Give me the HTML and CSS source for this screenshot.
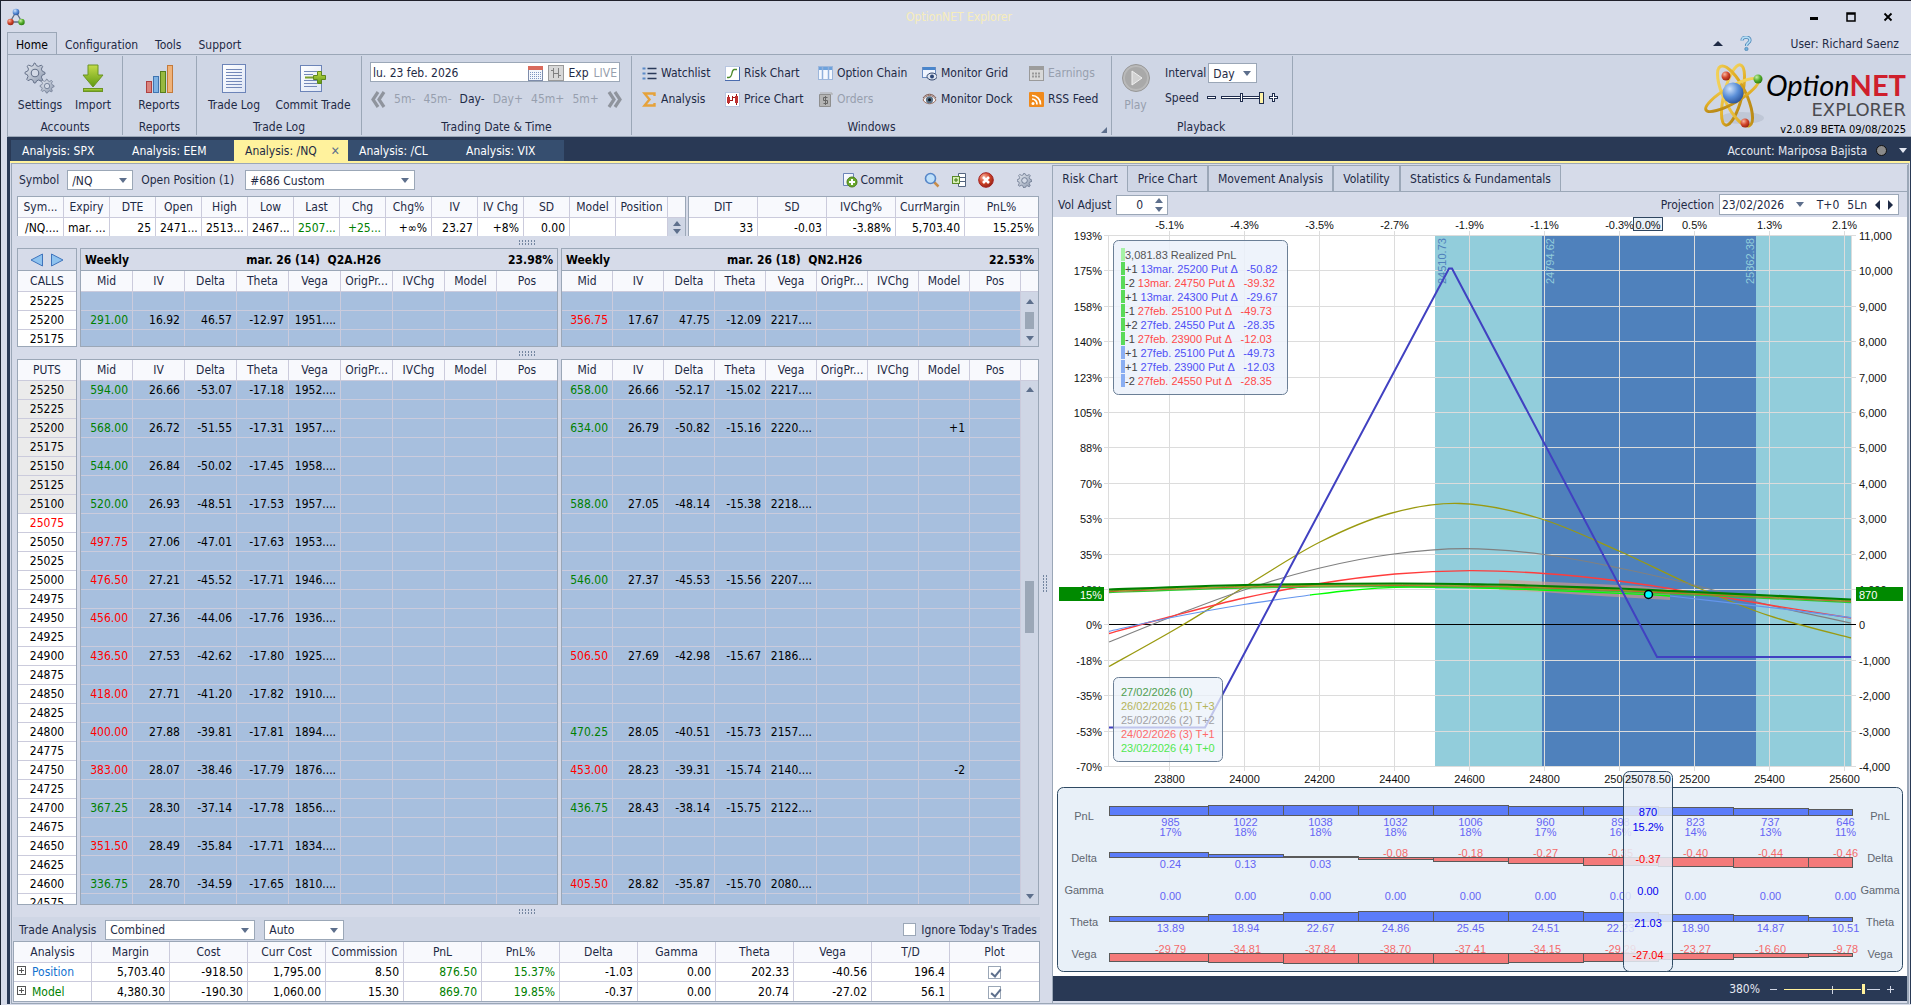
FILE: index.html
```html
<!DOCTYPE html>
<html lang="en">
<head>
<meta charset="utf-8">
<title>OptionNET Explorer</title>
<link rel="stylesheet" href="styles.css">
</head>
<body>
<svg class="defs" aria-hidden="true">
  <defs>
    <linearGradient id="gSteel" x1="0" y1="0" x2="1" y2="1"><stop offset="0" stop-color="#e9edf4"/><stop offset="1" stop-color="#8b97ad"/></linearGradient>
    <linearGradient id="gGreen" x1="0" y1="0" x2="0" y2="1"><stop offset="0" stop-color="#c5dc4a"/><stop offset="1" stop-color="#5f9a12"/></linearGradient>
    <linearGradient id="gPage" x1="0" y1="0" x2="1" y2="1"><stop offset="0" stop-color="#ffffff"/><stop offset="1" stop-color="#dde5f5"/></linearGradient>
    <radialGradient id="gBlue" cx=".35" cy=".3" r=".8"><stop offset="0" stop-color="#cfe2fb"/><stop offset=".5" stop-color="#5b8fd8"/><stop offset="1" stop-color="#22498f"/></radialGradient>
    <radialGradient id="gRed" cx=".35" cy=".3" r=".8"><stop offset="0" stop-color="#f7b5a0"/><stop offset=".5" stop-color="#d2452a"/><stop offset="1" stop-color="#8a1d10"/></radialGradient>
    <radialGradient id="gLime" cx=".35" cy=".3" r=".8"><stop offset="0" stop-color="#c9f0a5"/><stop offset=".5" stop-color="#55ae2c"/><stop offset="1" stop-color="#23700c"/></radialGradient>
    <linearGradient id="gGold" x1="0" y1="0" x2="1" y2="1"><stop offset="0" stop-color="#f7dc6a"/><stop offset=".6" stop-color="#e0ac22"/><stop offset="1" stop-color="#a87a10"/></linearGradient>
    <g id="cog"><path d="M8 0l1.2 2.2 1.6.5 2.3-1 1 1-1 2.2.7 1.6L16 7.6v1.2l-2.3 1-.6 1.5 1 2.3-1 1-2.2-1-1.6.7L8.4 16H7.2l-1-2.3-1.5-.6-2.3 1-1-1 1-2.3-.6-1.5L0 8.6V7.4l2.2-1 .6-1.5-1-2.3 1-1 2.3 1 1.5-.6L7.400 0z" fill="url(#gSteel)" stroke="#66728a" stroke-width=".8"/><circle cx="8" cy="8" r="3" fill="#d3d9e6" stroke="#66728a" stroke-width=".9"/></g>
  </defs>
</svg>
<div class="app">
  <header class="titlebar">
    <svg class="appicon" width="18" height="18" viewBox="0 0 18 18"><path d="M9 4L3 14h12z" fill="none" stroke="#5d6d84" stroke-width="1.300"/><circle cx="9" cy="4" r="3.300" fill="url(#gBlue)"/><circle cx="3.500" cy="14" r="3.200" fill="url(#gRed)"/><circle cx="14.500" cy="14" r="3.200" fill="url(#gLime)"/></svg>
    <h1>OptionNET Explorer</h1>
    <div class="winbtns">
      <button type="button" aria-label="Minimize"><svg width="10" height="10"><rect x="1" y="5" width="8" height="3"/></svg></button>
      <button type="button" aria-label="Maximize"><svg width="10" height="10"><path d="M1 1h8v8H1z M1 2h8" fill="none" stroke="#000" stroke-width="1.500"/></svg></button>
      <button type="button" aria-label="Close"><svg width="10" height="10"><path d="M1.500 1.500l7 7M8.500 1.500l-7 7" stroke="#000" stroke-width="1.800"/></svg></button>
    </div>
  </header>

  <nav class="menu">
    <button type="button" class="on">Home</button><button type="button">Configuration</button><button type="button">Tools</button><button type="button">Support</button>
    <div class="user"><i class="tri up dark"></i>
      <svg width="12" height="15" viewBox="0 0 12 15"><path d="M2 4.500C2 0 10 0 10 4.300 10 7 6.500 6.500 6.500 10" fill="none" stroke="#4f88b8" stroke-width="3.200"/><path d="M2 4.500C2 0 10 0 10 4.300 10 7 6.500 6.500 6.500 10" fill="none" stroke="#b5def5" stroke-width="1.600"/><circle cx="6.400" cy="13" r="1.700" fill="#6fb0dc" stroke="#3f78a8" stroke-width=".6"/></svg>
      <span>User: Richard Saenz</span></div>
  </nav>

  <section class="ribbon">
    <div class="group accounts"><div class="body">
      <button type="button" class="big"><svg width="32" height="32" viewBox="0 0 32 32"><use href="#cog" transform="translate(1 1) scale(1.250)"/><use href="#cog" transform="translate(16 17) scale(.88)"/></svg>Settings</button>
      <button type="button" class="big"><svg width="32" height="32" viewBox="0 0 32 32"><path d="M11 3h10v10h5L16 25 6 13h5z" fill="url(#gGreen)" stroke="#6b9423"/><rect x="6.500" y="26.500" width="19" height="3" fill="url(#gGreen)" stroke="#6b9423"/></svg>Import</button>
    </div><div class="caption">Accounts</div></div>
    <div class="group reports"><div class="body">
      <button type="button" class="big"><svg width="32" height="32" viewBox="0 0 32 32"><rect x="3.500" y="19.500" width="5" height="11" fill="#d9837d" stroke="#b04040"/><rect x="10.500" y="14.500" width="5" height="16" fill="#7fb2e3" stroke="#3f74b0"/><rect x="17.500" y="9.500" width="5" height="21" fill="#98b83f" stroke="#587e1c"/><rect x="24.500" y="3.500" width="5" height="27" fill="#efb27a" stroke="#c47a3a"/></svg>Reports</button>
    </div><div class="caption">Reports</div></div>
    <div class="group tradelog"><div class="body">
      <button type="button" class="big"><svg width="32" height="32" viewBox="0 0 32 32"><rect x="4.500" y="2.500" width="23" height="28" fill="url(#gPage)" stroke="#6c84b8"/><path d="M8 7.500h16M8 10.500h16M8 13.500h16M8 16.500h16M8 19.500h16M8 22.500h16M8 25.500h16" stroke="#7388b8"/></svg>Trade Log</button>
      <button type="button" class="big"><svg width="32" height="32" viewBox="0 0 32 32"><rect x="3.500" y="3.500" width="21" height="26" fill="url(#gPage)" stroke="#6c84b8"/><path d="M7 9.500h13M7 12.500h9M7 18.500h13M7 21.500h13M7 24.500h13" stroke="#7388b8"/><path d="M8 15.500h9" stroke="#7aa12c" stroke-width="2"/><path d="M20.500 9.500h4v4h4v4h-4v4h-4v-4h-4v-4h4z" fill="url(#gGreen)" stroke="#5e861d"/></svg>Commit Trade</button>
    </div><div class="caption">Trade Log</div></div>
    <div class="group dates"><div class="body">
      <div class="datebox"><input type="text" value="lu. 23 feb. 2026" aria-label="Trading date">
        <svg width="15" height="15" viewBox="0 0 15 15"><rect x=".5" y=".5" width="14" height="14" fill="#f4f7fc" stroke="#7d8cab"/><rect x="0" y="0" width="15" height="4" fill="#d96a5c"/><path d="M2 6.500h11M2 8.500h11M2 10.500h11M2 12.500h11" stroke="#7f95c0" stroke-dasharray="1 1"/></svg>
        <svg width="16" height="16" viewBox="0 0 16 16"><rect x=".5" y=".5" width="15" height="15" fill="#d8d8d8" stroke="#9a9a9a"/><path d="M5.500 3v10M10.500 3v10M3 5.500h2M6 8.500h4M11 10.500h2" stroke="#808080"/></svg>
        <span>Exp</span><span class="off">LIVE</span></div>
      <div class="steps">
        <svg width="16" height="17" viewBox="0 0 16 17"><path d="M8 1L3 8.500 8 16M14 1L9 8.500l5 7.500" fill="none" stroke="#8f949d" stroke-width="3.200"/></svg>
        <button type="button" class="off">5m-</button><button type="button" class="off">45m-</button><button type="button">Day-</button><button type="button" class="off">Day+</button><button type="button" class="off">45m+</button><button type="button" class="off">5m+</button>
        <svg width="16" height="17" viewBox="0 0 16 17"><path d="M2 1l5 7.500L2 16M8 1l5 7.500L8 16" fill="none" stroke="#8f949d" stroke-width="3.200"/></svg>
      </div>
    </div><div class="caption">Trading Date &amp; Time</div></div>
    <div class="group windows"><div class="body">
      <button type="button"><svg width="14" height="14" viewBox="0 0 14 14"><path d="M5 2.500h9M5 7.500h9M5 12.500h9" stroke="#2a3a5a" stroke-width="1.500"/><path d="M0 2.500h3M0 7.500h3M0 12.500h3" stroke="#5b8ac8" stroke-width="2"/></svg>Watchlist</button>
      <button type="button"><svg width="15" height="15" viewBox="0 0 15 15"><rect x=".5" y=".5" width="14" height="14" fill="#fff" stroke="#b8c6e0"/><path d="M2 11.500h2C8 11.500 6 4 9 3.500h3" fill="none" stroke="#4c8a2c" stroke-width="1.300"/><path d="M0 14.500h15M14.500 1v14" stroke="#4a6cae"/></svg>Risk Chart</button>
      <button type="button"><svg width="15" height="14" viewBox="0 0 15 14"><rect x=".5" y=".5" width="14" height="13" fill="#f4f8ff" stroke="#9db7dc"/><rect x="1" y="1" width="13" height="3" fill="#6ea2dc"/><path d="M4.500 1v12M10.500 1v12" stroke="#8fb0dc" stroke-width="1.500"/></svg>Option Chain</button>
      <button type="button"><svg width="15" height="15" viewBox="0 0 15 15"><rect x=".5" y="1.500" width="13" height="10" fill="#eef4ff" stroke="#6b8cc0"/><rect x="1" y="1" width="12" height="3" fill="#4a86cc"/><ellipse cx="10" cy="10.500" rx="5" ry="3.500" fill="#dfe6f2" stroke="#34486e"/><circle cx="10" cy="10.500" r="2" fill="#2c4676"/></svg>Monitor Grid</button>
      <button type="button" class="off"><svg width="15" height="15" viewBox="0 0 15 15"><rect x=".5" y=".5" width="14" height="14" fill="#d8d8d8" stroke="#9a9a9a"/><rect x="0" y="0" width="15" height="4" fill="#9c9c9c"/><path d="M3 7.500h9M3 10.500h9" stroke="#999" stroke-width="2" stroke-dasharray="2 1"/></svg>Earnings</button>
      <button type="button"><svg width="14" height="15" viewBox="0 0 14 15"><path d="M12 4V1.500H2L7 7.500 2 13.500h10V11" fill="none" stroke="#e6a23a" stroke-width="2.400"/></svg>Analysis</button>
      <button type="button"><svg width="15" height="15" viewBox="0 0 15 15"><rect x=".5" y=".5" width="14" height="14" fill="#fff" stroke="#b8c6e0"/><path d="M3.500 3v9M11.500 2v11M5 8.500h2M8 5.500h2M7.500 4v5" stroke="#a01818"/><rect x="2" y="5" width="3" height="6" fill="#c03030"/><rect x="10" y="4" width="3" height="7" fill="#c03030"/></svg>Price Chart</button>
      <button type="button" class="off"><svg width="15" height="15" viewBox="0 0 15 15"><path d="M1.500 2.500h11v12h-11z" fill="#b4b4b4" stroke="#8f8f8f"/><path d="M2 1h12v2" fill="none" stroke="#aaa"/><path d="M9.500 5.500H5.500v3h4v3h-4M7.500 4v9" fill="none" stroke="#666"/></svg>Orders</button>
      <button type="button"><svg width="15" height="13" viewBox="0 0 15 13"><path d="M1 7c3-6 10-6 13 0-3 5-10 5-13 0z" fill="#f0f2f6" stroke="#9c6b58"/><circle cx="7.500" cy="6.800" r="3.600" fill="#5a7288"/><circle cx="7.500" cy="6.800" r="1.500" fill="#111"/><path d="M1 5c3-5 10-5 13 0" fill="none" stroke="#7d5a50"/></svg>Monitor Dock</button>
      <button type="button"><svg width="15" height="15" viewBox="0 0 15 15"><rect width="15" height="15" rx="1" fill="#f08a1c"/><circle cx="4" cy="11.500" r="1.500" fill="#fff"/><path d="M3 7a5 5 0 0 1 5 5.500M3 3.500a8.500 8.500 0 0 1 8.500 9" fill="none" stroke="#fff" stroke-width="1.700"/></svg>RSS Feed</button>
    </div><div class="caption">Windows<i class="launcher"></i></div></div>
    <div class="group playback"><div class="body">
      <button type="button" class="big off"><svg width="32" height="32" viewBox="0 0 32 32"><circle cx="16" cy="16" r="13.500" fill="#b9b9b9" stroke="#979797"/><circle cx="16" cy="16" r="11" fill="#a9a9a9"/><path d="M12 9l10 7-10 7z" fill="#d2d2d2" stroke="#f0f0f0"/></svg>Play</button>
      <div class="playopts">
        <label>Interval<span class="combo"><select><option>Day</option></select></span></label>
        <div class="speed"><span>Speed</span>
          <svg width="72" height="14" viewBox="0 0 72 14"><g fill="#fff" stroke="#1f2d4d" shape-rendering="crispEdges"><rect x="1.500" y="5.500" width="8" height="2"/><rect x="15.500" y="5.500" width="41" height="2"/><rect x="34.500" y="2.500" width="2" height="8"/><rect x="53.500" y="1.500" width="4" height="11" fill="#fff3a8"/><path d="M66.500 2.500h2v3h3v2h-3v3h-2v-3h-3v-2h3z"/></g></svg></div>
      </div>
    </div><div class="caption">Playback</div></div>
    <div class="brand">
      <svg width="62" height="68" viewBox="0 0 62 68">
        <ellipse cx="38" cy="56" rx="22" ry="6" fill="#b4bccb" opacity=".6"/>
        <g fill="none" stroke="url(#gGold)" stroke-width="3"><ellipse cx="29" cy="33" rx="9" ry="31" transform="rotate(14 29 33)"/><ellipse cx="31" cy="34" rx="11" ry="33" transform="rotate(-26 31 34)"/><ellipse cx="28" cy="33" rx="8" ry="30" transform="rotate(60 28 33)"/></g>
        <circle cx="29" cy="31" r="10.500" fill="url(#gBlue)"/><circle cx="22" cy="14" r="4.500" fill="url(#gRed)"/><circle cx="54" cy="17" r="4.500" fill="url(#gLime)"/><circle cx="41" cy="61" r="4.500" fill="url(#gRed)"/>
      </svg>
      <div class="wordmark"><div class="name"><em>Option</em><b>NET</b></div><div class="sub">EXPLORER</div><div class="ver">v2.0.89 BETA 09/08/2025</div></div>
    </div>
  </section>

  <main class="workspace">
    <div class="doctabs">
      <div class="strip"><button type="button">Analysis: SPX</button><button type="button">Analysis: EEM</button><button type="button" class="on">Analysis: /NQ <span>✕</span></button><button type="button">Analysis: /CL</button><button type="button">Analysis: VIX</button></div>
      <div class="account"><span>Account: Mariposa Bajista</span><i class="led"></i><i class="tri"></i></div>
    </div>
    <div class="doc"><div class="frame">
      <section class="left">
        <div class="upper">
          <div class="toolbar">
            <label>Symbol <span class="combo sym"><select><option>/NQ</option></select></span></label>
            <label>Open Position (1) <span class="combo pos"><select><option>#686 Custom</option></select></span></label>
            <div class="tools">
              <button type="button"><svg width="16" height="16" viewBox="0 0 16 16"><path d="M1.500 1.500h10v12h-10z" fill="url(#gPage)" stroke="#6c84b8"/><circle cx="10" cy="10" r="5" fill="#6aa82c" stroke="#4a7d18"/><path d="M10 7v6M7 10h6" stroke="#fff" stroke-width="2"/></svg>Commit</button>
              <button type="button" aria-label="Search"><svg width="16" height="16" viewBox="0 0 16 16"><path d="M10 10l4.500 4.500" stroke="#c98d4a" stroke-width="2.500"/><circle cx="6.500" cy="6.500" r="5" fill="#bfe0fa" stroke="#5686c8" stroke-width="1.600"/></svg></button>
              <button type="button" aria-label="Expand"><svg width="16" height="16" viewBox="0 0 16 16"><path d="M7.500 1.500h7v13h-7zM7.500 5.500h7M7.500 9.500h7" fill="#fff" stroke="#54657f"/><rect x="1.500" y="4.500" width="7" height="7" fill="#d9efb8" stroke="#5a8a28"/><path d="M5 6v4M3 8h4" stroke="#3f7a10"/></svg></button>
              <button type="button" aria-label="Delete"><svg width="16" height="16" viewBox="0 0 16 16"><circle cx="8" cy="8" r="7.300" fill="url(#gRed)" stroke="#a52222"/><path d="M5 5l6 6M11 5l-6 6" stroke="#fff" stroke-width="2.600"/></svg></button>
              <button type="button" aria-label="Options" class="far"><svg width="15" height="15" viewBox="0 0 16 16"><use href="#cog"/></svg></button>
            </div>
          </div>
          <div class="summary">
            <div class="grid s1"><table id="sum1"></table><div class="scroll"><i class="head"></i><i class="tri up"></i><i class="tri"></i></div></div>
            <div class="grid s2"><table id="sum2"></table></div>
          </div>
          <div class="grip"></div>
          <div class="chains calls">
            <div class="grid strikes"><div class="band arrows"><svg width="34" height="14" viewBox="0 0 34 14"><path d="M12.500 1v12L1 7z" fill="#8fc3ef" stroke="#3f74bc"/><path d="M21.500 1v12L33 7z" fill="#8fc3ef" stroke="#3f74bc"/></svg></div><table id="callStrikes"></table></div>
            <div class="grid chain"><div class="band"><span>Weekly</span><span>mar. 26 (14)&nbsp; Q2A.H26</span><span>23.98%</span></div><table id="calls1"></table></div>
            <div class="grid chain"><div class="band"><span>Weekly</span><span>mar. 26 (18)&nbsp; QN2.H26</span><span>22.53%</span></div><div class="with"><table id="calls2"></table><div class="scroll"><i class="head"></i><i class="tri up"></i><i class="thumb"></i><i class="tri"></i></div></div></div>
          </div>
          <div class="grip"></div>
          <div class="chains puts">
            <div class="grid strikes"><table id="putStrikes"></table></div>
            <div class="grid chain"><table id="puts1"></table></div>
            <div class="grid chain"><div class="with"><table id="puts2"></table><div class="scroll"><i class="head"></i><i class="tri up"></i><i class="thumb"></i><i class="tri"></i></div></div></div>
          </div>
          <div class="grip"></div>
        </div>
        <div class="tradebar">
          <label>Trade Analysis <span class="combo comb"><select><option>Combined</option></select></span></label>
          <span class="combo auto"><select aria-label="Mode"><option>Auto</option></select></span>
          <label class="ignore"><input type="checkbox"> Ignore Today's Trades</label>
        </div>
        <div class="grid trades"><table id="trades"></table></div>
        <div class="vgrip"></div>
      </section>

      <section class="right">
        <div class="charttabs"><button type="button" class="on">Risk Chart</button><button type="button">Price Chart</button><button type="button">Movement Analysis</button><button type="button">Volatility</button><button type="button">Statistics &amp; Fundamentals</button></div>
        <div class="chartopts">
          <label>Vol Adjust <span class="spin"><input type="text" value="0"><span><i class="tri up"></i><i class="tri"></i></span></span></label>
          <label>Projection <span class="proj"><input type="text" value="23/02/2026"><i class="tri"></i><span>T+0</span><span>5Ln</span><i class="tri side l"></i><i class="tri side r"></i></span></label>
        </div>
        <svg class="chart" id="chart" viewBox="1053 217 854 759" preserveAspectRatio="none">
          <g id="zones"><rect x="1435" y="236" width="416" height="530" fill="#92cddb"/><rect x="1542" y="236" width="214" height="530" fill="#4f81bc"/></g>
          <g id="gridlines" stroke="#dcdcdc" shape-rendering="crispEdges"></g>
          <g class="t rot"><text transform="translate(1446 284) rotate(-90)" fill="#4f81bc">24510.73</text><text transform="translate(1554 284) rotate(-90)" fill="#92cddb">24794.62</text><text transform="translate(1754 284) rotate(-90)" fill="#92cddb">25362.38</text></g>
          <path d="M1109 624.500H1856" stroke="#000" shape-rendering="crispEdges"/>
          <path d="M1499 579.500L1640 586 1670 590V600L1600 596 1540 592 1499 590z" fill="#e09a84" opacity=".6"/>
          <g id="curves" fill="none"></g>
          <path d="M1109 727.500H1205L1449 268.500H1452L1657 657H1851" fill="none" stroke="#4141c1" stroke-width="2"/>
          <circle cx="1648.500" cy="594.500" r="4" fill="#00ffff" stroke="#000" stroke-width="1.500"/>
          <g class="t" id="axes"></g>
          <g class="t" id="markers">
            <rect x="1059" y="587" width="45" height="14" fill="#008a00"/><text x="1102" y="599" text-anchor="end" fill="#fff">15%</text>
            <rect x="1856" y="587" width="47" height="14" fill="#008a00"/><text x="1859" y="599" fill="#fff">870</text>
            <rect x="1633.500" y="217.500" width="29" height="13" fill="#e8f0f8" stroke="#2f4660"/><text x="1648" y="229" text-anchor="middle">0.0%</text>
          </g>
          <g class="t" id="legend"><rect x="1113.500" y="240.500" width="174" height="154" rx="5" fill="#ebf1fa" fill-opacity=".85" stroke="#6b7f96"/></g>
          <g class="t" id="dates"><rect x="1113.500" y="677.500" width="109" height="84" rx="5" fill="#ebf1fa" fill-opacity=".75" stroke="#6b7f96"/></g>
          <g class="t" id="greeks"><rect x="1057.500" y="787.500" width="845" height="184" rx="6" fill="#e8f0f8" stroke="#2f4a63"/></g>
          <g class="t" id="cursor"><rect x="1623.500" y="771.500" width="49" height="200" rx="6" fill="#e8eff8" fill-opacity=".85" stroke="#2f4a63"/></g>
        </svg>
        <footer><span>380%</span><svg width="128" height="16" viewBox="0 0 128 16" shape-rendering="crispEdges"><path d="M1 8.500h7M98 8.500h13M118 8.500h7M121.500 5v7M63.500 5v8" stroke="#cfd6e5"/><path d="M15 8.500h77" stroke="#fff29d"/><rect x="93" y="3" width="3" height="10" fill="#fff29d"/></svg></footer>
      </section>
    </div></div>
  </main>
</div>
<script src="app.js"></script>
</body>
</html>
```

FILE: styles.css
```css
* { box-sizing: border-box; }
html, body { height: 100%; margin: 0; }
body, button, input, select {
  font-family: "DejaVu Sans Condensed", "Noto Sans", sans-serif;
  font-size: 12px;
  color: #1e2a45;
}
button { background: none; border: 0; padding: 0; margin: 0; white-space: nowrap; }
.defs { position: absolute; width: 0; height: 0; }
.off, button.off { color: #979fae; }
svg { display: block; flex: none; }

.tri { display: inline-block; border: 4px solid transparent; border-top: 5px solid #5d6f8c; border-bottom: 0; }
.tri.up { border-top: 0; border-bottom: 5px solid #5d6f8c; }
.tri.up.dark { border-bottom-color: #1e2a45; border-left-width: 5px; border-right-width: 5px; }
.tri.side { border: 5px solid transparent; border-left: 0; border-right: 0; }
.tri.side.l { border-right: 5px solid #1e2a45; }
.tri.side.r { border-left: 5px solid #1e2a45; }

.app {
  display: flex; flex-direction: column;
  height: 100vh;
  background: #d6dbe9;
  border-top: 1px solid #20202a; border-left: 1px solid #1b2433;
  padding: 0 0 1px 6px;
  overflow: hidden;
}

/* title bar */
.titlebar { display: grid; grid-template-columns: 110px 1fr 110px; align-items: center; height: 31px; flex: none; }
.titlebar h1 { margin: 0; text-align: center; font-size: 12px; font-weight: normal; color: #f6edbb; }
.winbtns { display: flex; gap: 27px; justify-content: flex-end; padding-right: 18px; }

/* menu */
.menu { display: flex; height: 22px; flex: none; align-items: stretch; }
.menu > button { padding: 2px 9px 0 8px; border-top: 1px solid transparent; }
.menu > button.on { background: #cfd6e5; border: 1px solid #9ba7b7; border-bottom: 0; color: #000; padding: 2px 8px 0; }
.user { display: flex; align-items: center; gap: 17px; margin-left: auto; padding: 1px 12px 0 0; }
.user span { padding-left: 22px; }

/* ribbon */
.ribbon { display: flex; height: 83px; flex: none; background: #cfd6e5; border: 1px solid #9ba7b7; border-right: 0; }
.group { display: flex; flex-direction: column; border-right: 1px solid #9ba7b7; margin: 1px 0; }
.group .body { flex: 1; display: flex; }
.caption { height: 17px; line-height: 19px; text-align: center; position: relative; }
.launcher { position: absolute; right: 4px; bottom: 2px; border: 3px solid #5d6f8c; border-top-color: transparent; border-left-color: transparent; }
.big { display: flex; flex-direction: column; align-items: center; gap: 4px; padding-top: 6px; }
.accounts { width: 115px; } .accounts .body { padding-left: 3px; }
.accounts .big { width: 58px; } .accounts .big + .big { width: 48px; }
.reports { width: 74px; } .reports .big { width: 72px; }
.tradelog { width: 165px; } .tradelog .body { padding-left: 3px; }
.tradelog .big { width: 68px; } .tradelog .big + .big { width: 90px; }
.dates { width: 270px; }
.dates .body { flex-direction: column; padding: 6px 8px 0 8px; gap: 8px; }
.datebox { display: flex; align-items: center; gap: 5px; height: 20px; width: 250px; background: #fff; border: 1px solid #9ba7b7; padding: 2px 2px 0; }
.datebox input { flex: 1; min-width: 0; border: 0; padding: 0; background: none; }
.steps { display: flex; justify-content: space-between; align-items: center; height: 18px; width: 253px; }
.windows { width: 480px; }
.windows .body { display: grid; grid-template-columns: 83px 93px 104px 107px 1fr; grid-template-rows: 26px 26px; padding: 4px 0 0 10px; }
.windows .body button { display: flex; align-items: center; gap: 4px; }
.windows .body svg { width: 15px; }
.playback { width: 181px; }
.playback .big { width: 47px; }
.playopts { padding: 7px 0 0 6px; }
.playopts label { display: flex; align-items: center; gap: 2px; height: 20px; }
.playopts .combo { width: 49px; height: 20px; }
.speed { display: flex; align-items: center; gap: 7px; height: 30px; }
.playback .caption { text-align: left; padding-left: 65px; }
.brand { margin-left: auto; display: flex; padding: 7px 5px 0 0; }
.wordmark { display: flex; flex-direction: column; align-items: flex-end; padding-top: 5px; }
.name { font: 29px/36px Lato, sans-serif; color: #000; }
.name em { font-style: italic; } .name b { color: #cf1f2c; font-weight: 700; }
.sub { font: 18px/14px "DejaVu Sans", sans-serif; color: #4b4b50; }
.ver { color: #000; font-size: 11px; line-height: 14px; margin-top: 6px; }

/* combos */
.combo { position: relative; display: inline-block; height: 20px; background: #fff; border: 1px solid #9ba7b7; }
.combo select { appearance: none; width: 100%; height: 100%; border: 0; background: none; padding: 1px 4px 0; margin: 0; display: block; }
.combo::after { content: ""; position: absolute; right: 5px; top: 7px; border: 4px solid transparent; border-top: 5px solid #5d6f8c; border-bottom: 0; pointer-events: none; }

/* workspace */
.workspace { flex: 1; min-height: 0; display: flex; flex-direction: column; background: #293955; padding: 3px 1px 0 3px; }
.doctabs { display: flex; height: 21px; flex: none; justify-content: space-between; padding-left: 1px; }
.strip { display: flex; background: #364e6f; }
.strip button { color: #fff; text-align: left; padding-left: 11px; width: 110px; }
.strip button:nth-child(2) { width: 113px; }
.strip button.on { background: #fff29d; color: #1e2a45; width: 114px; display: flex; align-items: center; gap: 14px; }
.strip button.on span { font-size: 12px; color: #5d6f8c; }
.strip button:nth-child(4) { width: 107px; }
.strip button:nth-child(5) { width: 109px; }
.account { display: flex; align-items: center; color: #e4e8f2; gap: 9px; padding-right: 3px; }
.led { width: 11px; height: 11px; border-radius: 50%; background: #8a8a8a; border: 1px solid #111; }
.account .tri { border-top-color: #e4e8f2; margin-left: 3px; }
.doc { flex: 1; min-height: 0; display: flex; border-top: 2px solid #fff29d; background: #d6dbe9; padding: 0 1px 0 1px; }
.frame { flex: 1; display: grid; grid-template-columns: minmax(0, 1040fr) minmax(0, 856fr); border: 1px solid #9ba7b7; min-height: 0; }
.left { display: flex; flex-direction: column; min-height: 0; padding: 0 12px 1px 1px; position: relative; }
.upper { flex: 1; min-height: 0; display: flex; flex-direction: column; padding: 0 1px 0 4px; }

.toolbar { display: flex; align-items: center; height: 32px; flex: none; gap: 8px; padding-left: 2px; }
.toolbar label { display: flex; align-items: center; gap: 8px; }
.toolbar label + label { gap: 11px; }
.sym { width: 66px; } .pos { width: 170px; }
.tools { display: flex; align-items: center; margin-left: auto; gap: 11px; padding-right: 7px; }
.tools button { display: flex; align-items: center; gap: 3px; }
.tools button:first-child { margin-right: 10px; } .tools .far { margin-left: 12px; }

/* grids */
.grid { border: 1px solid #9ba7b7; overflow: hidden; background: #fff; }
.grid table { border-collapse: separate; border-spacing: 0; table-layout: fixed; width: 100%; flex: 1; }
.grid th, .grid td { height: 19px; line-height: 17px; padding: 1px 4px 0; border-right: 1px solid #cbcbdc; border-bottom: 1px solid #cbcbdc; text-align: right; white-space: nowrap; overflow: hidden; color: #000; }
.grid th { height: 21px; line-height: 20px; padding: 0; font-weight: normal; text-align: center; background: #f8f9fd; color: #1e2a45; }
.grid th:last-child, .grid td:last-child { border-right: 0; }
.grid td.g { color: #008000; } .grid td.r { color: #ff0000; } .grid td.b { color: #1272cf; }

.summary { display: grid; grid-template-columns: minmax(0, 669fr) minmax(0, 351fr); gap: 2px; height: 40px; flex: none; }
.summary .grid { border-bottom: 0; }
.summary td { border-bottom: 0; }
.s1, .with { display: flex; min-height: 0; }
.s1 table { align-self: flex-start; }
.s1 th:last-child, .s1 td:last-child, .with th:last-child, .with td:last-child { border-right: 1px solid #cbcbdc; }
.scroll { width: 17px; flex: none; background: #cfd6e5; display: flex; flex-direction: column; align-items: center; justify-content: space-between; padding-bottom: 2px; }
.scroll .head { height: 21px; width: 17px; flex: none; background: #f8f9fd; border-bottom: 1px solid #cbcbdc; }
.scroll .thumb { width: 9px; background: #9ba7b7; }

.grip, .vgrip { background: conic-gradient(transparent 75%, #7486a0 0) 0 0 / 3px 3px; }
.grip { height: 12px; flex: none; background-clip: content-box; background-origin: content-box; padding: 4px calc(50% - 9px) 3px; }
.vgrip { position: absolute; right: 3px; top: 411px; width: 6px; height: 18px; }

.chains { display: grid; grid-template-columns: 60px minmax(0, 1fr) minmax(0, 1fr); gap: 3px; min-height: 0; }
.calls { height: 99px; flex: none; }
.puts { flex: 1; grid-template-rows: minmax(0, 1fr); }
.band { display: grid; grid-template-columns: 15fr auto 16fr; align-items: center; height: 22px; padding: 1px 4px 0; background: #d6dbe9; border-bottom: 1px solid #9ba7b7; color: #000; font-weight: bold; }
.band span:last-child { text-align: right; }
.band.arrows { display: flex; justify-content: center; padding: 0; }
.chain { background: #a7bfde; display: flex; flex-direction: column; }
.chain .band { flex: none; }
.chain > table { flex: none; }
.chain .with { flex: 1; align-items: stretch; }
.with table { align-self: flex-start; }
.strikes td { text-align: center; }
.strikes td.hi { background: #ebebeb; }
.calls .scroll { padding-bottom: 5px; }
.calls .thumb { height: 17px; }
.puts .scroll { justify-content: flex-start; padding-bottom: 5px; }
.puts .scroll .head { margin-bottom: 6px; }
.puts .thumb { height: 52px; margin: 189px 0 auto; }

.tradebar { display: flex; align-items: center; height: 24px; flex: none; background: #cfd6e5; gap: 9px; padding: 1px 3px 0 6px; }
.tradebar label { display: flex; align-items: center; gap: 9px; }
.comb { width: 150px; } .auto { width: 80px; }
.tradebar .ignore { margin-left: auto; gap: 5px; }
input[type=checkbox] { appearance: none; width: 13px; height: 13px; margin: 0; background: #fff; border: 1px solid #9ba7b7; display: inline-block; vertical-align: middle; }
input[type=checkbox]:checked::after { content: ""; display: block; width: 4px; height: 8px; margin: 0 0 0 4px; border: solid #5d6f8c; border-width: 0 2px 2px 0; transform: rotate(40deg); }
.trades { flex: none; }
.grid.trades td:first-child { text-align: left; padding-left: 3px; }
.grid.trades td:last-child { text-align: center; line-height: 15px; }
.trades tr:last-child td { border-bottom: 0; }
.exp { display: inline-block; width: 9px; height: 9px; margin-right: 6px; vertical-align: 1px; border: 1px solid #555; background: linear-gradient(#555, #555) center / 5px 1px no-repeat, linear-gradient(#555, #555) center / 1px 5px no-repeat, #fff; }

/* right panel */
.right { display: flex; flex-direction: column; min-height: 0; border-left: 1px solid #9ba7b7; border-right: 1px solid #9ba7b7; margin-top: 1px; padding-bottom: 2px; }
.charttabs { display: flex; height: 27px; flex: none; background: linear-gradient(#9ba7b7, #9ba7b7) bottom / 100% 1px no-repeat; }
.charttabs button { width: 81px; background: #cfd6e5; border: 1px solid #9ba7b7; border-left-width: 0; border-right-width: 2px; }
.charttabs button.on { background: #d6dbe9; border-bottom-color: #d6dbe9; width: 75px; border-right-width: 1px; }
.charttabs button:nth-child(3) { width: 125px; } .charttabs button:nth-child(4) { width: 67px; } .charttabs button:nth-child(5) { width: 160px; border-right-width: 1px; }
.chartopts { display: flex; justify-content: space-between; align-items: center; height: 25px; flex: none; padding: 0 8px 0 5px; }
.chartopts label { display: flex; align-items: center; gap: 5px; }
.chartopts input { border: 0; background: none; padding: 0; min-width: 0; }
.spin { display: flex; align-items: center; width: 52px; height: 20px; background: #fff; border: 1px solid #9ba7b7; padding-right: 4px; }
.spin input { flex: 1; text-align: right; padding-right: 12px; }
.spin > span { display: flex; flex-direction: column; gap: 4px; }
.proj { display: flex; align-items: center; width: 180px; height: 21px; background: #fff; border: 1px solid #9ba7b7; padding: 0 5px 0 2px; gap: 8px; }
.proj input { width: 67px; }
.proj > .tri:first-of-type { margin-right: 5px; }
.chart { flex: 1; min-height: 0; width: 100%; background: #fff; }
.chart .t { font: 11px "Liberation Sans", Arial, sans-serif; fill: #111; }
.chart text { white-space: pre; }
.right footer { height: 25px; flex: none; background: #293955; color: #e4e8f2; display: flex; align-items: center; justify-content: flex-end; gap: 9px; padding-right: 10px; }
```

FILE: app.js
```js
const $ = id => document.getElementById(id);

/* Builds a table: columns are [label, width]; cells are text or [text, class]. */
function fill(id, cols, rows) {
  const group = cols.map(c => `<col${c[1] ? ` style="width:${c[1]}px"` : ''}>`).join('');
  const head = cols.map(c => `<th>${c[0]}</th>`).join('');
  const body = rows.map(r => '<tr>' + cols.map((c, i) => {
    const v = r[i] === undefined ? '' : r[i];
    return Array.isArray(v) ? `<td class="${v[1]}">${v[0]}</td>` : `<td>${v}</td>`;
  }).join('') + '</tr>').join('');
  $(id).innerHTML = `<colgroup>${group}</colgroup><thead><tr>${head}</tr></thead><tbody>${body}</tbody>`;
}

fill('sum1',
  ['Sym...', 'Expiry', 'DTE', 'Open', 'High', 'Low', 'Last', 'Chg', 'Chg%', 'IV', 'IV Chg', 'SD', 'Model'].map(n => [n, 46]).concat([['Position']]),
  [['/NQ....', 'mar. ...', '25', '2471...', '2513...', '2467...', ['2507...', 'g'], ['+25...', 'g'], '+∞%', '23.27', '+8%', '0.00']]);
fill('sum2', [['DIT', 69], ['SD', 69], ['IVChg%', 69], ['CurrMargin', 69], ['PnL%']],
  [['33', '-0.03', '-3.88%', '5,703.40', '15.25%']]);

const names = ['Mid', 'IV', 'Delta', 'Theta', 'Vega', 'OrigPr...', 'IVChg', 'Model', 'Pos'];
const cols1 = names.map((n, i) => [n, i < 8 ? 52 : 0]);
const cols2 = names.map((n, i) => [n, i < 8 ? 51 : 0]);

function quote(line) {
  if (!line) return [];
  const [mid, iv, delta, theta, vega, model] = line.split(' ');
  return [[mid.slice(1), mid[0]], iv, delta, theta, vega + '....', '', '', model || ''];
}

fill('callStrikes', [['CALLS']], [['25225'], ['25200'], ['25175']]);
fill('calls1', cols1, ['', 'g291.00 16.92 46.57 -12.97 1951', ''].map(quote));
fill('calls2', cols2, ['', 'r356.75 17.67 47.75 -12.09 2217', ''].map(quote));

const near = {
  25250: 'g594.00 26.66 -53.07 -17.18 1952', 25200: 'g568.00 26.72 -51.55 -17.31 1957',
  25150: 'g544.00 26.84 -50.02 -17.45 1958', 25100: 'g520.00 26.93 -48.51 -17.53 1957',
  25050: 'r497.75 27.06 -47.01 -17.63 1953', 25000: 'r476.50 27.21 -45.52 -17.71 1946',
  24950: 'r456.00 27.36 -44.06 -17.76 1936', 24900: 'r436.50 27.53 -42.62 -17.80 1925',
  24850: 'r418.00 27.71 -41.20 -17.82 1910', 24800: 'r400.00 27.88 -39.81 -17.81 1894',
  24750: 'r383.00 28.07 -38.46 -17.79 1876', 24700: 'g367.25 28.30 -37.14 -17.78 1856',
  24650: 'r351.50 28.49 -35.84 -17.71 1834', 24600: 'g336.75 28.70 -34.59 -17.65 1810'
};
const far = {
  25250: 'g658.00 26.66 -52.17 -15.02 2217', 25200: 'g634.00 26.79 -50.82 -15.16 2220 +1',
  25100: 'g588.00 27.05 -48.14 -15.38 2218', 25000: 'g546.00 27.37 -45.53 -15.56 2207',
  24900: 'r506.50 27.69 -42.98 -15.67 2186', 24800: 'g470.25 28.05 -40.51 -15.73 2157',
  24750: 'r453.00 28.23 -39.31 -15.74 2140 -2', 24700: 'g436.75 28.43 -38.14 -15.75 2122',
  24600: 'r405.50 28.82 -35.87 -15.70 2080'
};
const strikes = Array.from({ length: 28 }, (_, i) => 25250 - 25 * i);
fill('putStrikes', [['PUTS']], strikes.map(s => [[s, s > 25075 ? 'hi' : s === 25075 ? 'r' : '']]));
fill('puts1', cols1, strikes.map(s => quote(near[s])));
fill('puts2', cols2, strikes.map(s => quote(far[s])));

const plot = '<input type="checkbox" checked aria-label="Plot">';
fill('trades',
  ['Analysis', 'Margin', 'Cost', 'Curr Cost', 'Commission', 'PnL', 'PnL%', 'Delta', 'Gamma', 'Theta', 'Vega', 'T/D'].map(n => [n, 78]).concat([['Plot']]),
  [
    [['<i class="exp"></i>Position', 'b'], '5,703.40', '-918.50', '1,795.00', '8.50', ['876.50', 'g'], ['15.37%', 'g'], '-1.03', '0.00', '202.33', '-40.56', '196.4', plot],
    [['<i class="exp"></i>Model', 'g'], '4,380.30', '-190.30', '1,060.00', '15.30', ['869.70', 'g'], ['19.85%', 'g'], '-0.37', '0.00', '20.74', '-27.02', '56.1', plot]
  ]);

/* chart */
const add = (id, markup) => $(id).insertAdjacentHTML('beforeend', markup);
const text = (x, y, s, anchor = 'middle', fill = '') =>
  `<text x="${x}" y="${y + 4}" text-anchor="${anchor}"${fill ? ` fill="${fill}"` : ''}>${s}</text>`;

const xs = Array.from({ length: 10 }, (_, i) => 1169.5 + 75 * i);
const ys = Array.from({ length: 16 }, (_, i) => Math.floor(235.5 + 35.4 * i) + 0.5);
let lines = '<path d="M1108.500 235V767M1851.500 235V767"/>';
xs.forEach(x => { lines += `<path d="M${x} 231V771"/>`; });
ys.forEach(y => { lines += `<path d="M1104 ${y}H1856"/>`; });
$('gridlines').innerHTML = lines;

const pct = ['193%', '175%', '158%', '140%', '123%', '105%', '88%', '70%', '53%', '35%', '18%', '0%', '-18%', '-35%', '-53%', '-70%'];
ys.forEach((y, i) => {
  add('axes', text(1102, y, pct[i], 'end'));
  add('axes', text(1859, y, ((11 - i) * 1000).toLocaleString('en-US'), 'start'));
});
['-5.1%', '-4.3%', '-3.5%', '-2.7%', '-1.9%', '-1.1%', '-0.3%', '0.5%', '1.3%', '2.1%'].forEach((s, i) => add('axes', text(xs[i], 225, s)));
xs.forEach((x, i) => add('axes', text(x, 779, 23800 + 200 * i)));

/* Smooth path through the points (Catmull-Rom to Bezier). */
function curve(color, width, pts, dy = 0) {
  const p = pts.map(([x, y]) => [x, y + dy]);
  let d = `M${p[0]}`;
  for (let i = 0; i < p.length - 1; i++) {
    const a = p[i - 1] || p[i], b = p[i], c = p[i + 1], e = p[i + 2] || c;
    d += `C${b[0] + (c[0] - a[0]) / 6} ${b[1] + (c[1] - a[1]) / 6} ${c[0] - (e[0] - b[0]) / 6} ${c[1] - (e[1] - b[1]) / 6} ${c}`;
  }
  add('curves', `<path d="${d}" stroke="${color}" stroke-width="${width}"/>`);
}
const base = [[1109, 590], [1244, 585.5], [1395, 584], [1490, 585], [1544, 586.5], [1619, 589], [1694, 592.5], [1769, 596], [1851, 600]];
curve('#9a9a10', 1.3, [[1109, 666.5], [1180, 626.5], [1250, 583.5], [1320, 542], [1390, 513.5], [1460, 503.5], [1540, 518.5], [1619, 551], [1694, 586], [1769, 615.7], [1851, 638]]);
curve('#808080', 1.2, [[1109, 642], [1180, 613.5], [1250, 588], [1320, 568], [1390, 554.5], [1465, 548.7], [1544, 554.5], [1619, 568], [1694, 585], [1769, 605], [1851, 623]]);
curve('#ff3c3c', 1.3, [[1109, 633.5], [1169, 617], [1244, 598], [1320, 583.5], [1395, 574], [1470, 570.7], [1544, 573.5], [1619, 581], [1694, 592.5], [1769, 605], [1851, 618]]);
curve('#6495ed', 1.2, [[1109, 631.3], [1169, 618], [1244, 604.5], [1310, 595]]);
curve('#00ff00', 1.3, [[1310, 595], [1350, 590.5], [1395, 587.3], [1480, 588], [1540, 590], [1600, 592.5], [1648, 594.7], [1670, 596]]);
curve('#6495ed', 1.2, [[1670, 596], [1769, 607.3], [1851, 617.7]]);
curve('#30c830', 1.3, base, 2.5);
curve('#c06030', 1.2, base, 1.5);
curve('#9a9a10', 1, base, 0.8);
curve('#008000', 2.2, base, -0.5);

/* position legend */
const G = '#5ada5a', B = '#8aaef2';
[
  ['#a6f2a6', '', '3,081.83 Realized PnL', '#555'],
  [G, '+1', '13mar. 25200 Put Δ   -50.82', '#5050f5'], [G, '-2', '13mar. 24750 Put Δ   -39.32', '#ff4a4a'],
  [G, '+1', '13mar. 24300 Put Δ   -29.67', '#5050f5'], [G, '-1', '27feb. 25100 Put Δ   -49.73', '#ff4a4a'],
  [G, '+2', '27feb. 24550 Put Δ   -28.35', '#5050f5'], [G, '-1', '27feb. 23900 Put Δ   -12.03', '#ff4a4a'],
  [B, '+1', '27feb. 25100 Put Δ   -49.73', '#5050f5'], [B, '+1', '27feb. 23900 Put Δ   -12.03', '#5050f5'],
  [B, '-2', '27feb. 24550 Put Δ   -28.35', '#ff4a4a']
].forEach(([bar, qty, s, c], i) => {
  const y = 255 + 14 * i;
  add('legend', `<rect x="1121" y="${y - 7}" width="4" height="13" fill="${bar}"/><text x="1125" y="${y + 4}" fill="#444">${qty ? qty + ' ' : ''}<tspan fill="${c}">${s}</tspan></text>`);
});

[['27/02/2026 (0)', '#4f9e4f'], ['26/02/2026 (1) T+3', '#b4b45a'], ['25/02/2026 (2) T+2', '#a0a0a4'], ['24/02/2026 (3) T+1', '#ff6a6a'], ['23/02/2026 (4) T+0', '#50e850']]
  .forEach(([s, c], i) => add('dates', text(1121, 692 + 14 * i, s, 'start', c)));

/* greek histogram rows */
const edges = [1109, 1208, 1283, 1358, 1433, 1508, 1583, 1658, 1733, 1808, 1852];
const blue = '#5b7cfa', red = '#f47a7a', tb = '#6464f5', tr = '#f56a6a';
function bars(baseY, heights) {
  heights.forEach((h, i) => {
    add('greeks', `<rect x="${edges[i] + 0.5}" y="${(h > 0 ? baseY - h : baseY) + 0.5}" width="${edges[i + 1] - edges[i]}" height="${Math.abs(h)}" fill="${h > 0 ? blue : red}" stroke="#5a5a5a"/>`);
  });
}
bars(815, [9, 10, 10, 10, 10, 9, 9, 8, 7, 6]);
bars(857, [5, 3, 1, -2, -4, -6, -8, -9, -10, -10]);
bars(921, [5, 7, 9, 10, 10, 10, 9, 7, 6, 4]);
bars(953, [-8, -9, -10, -10, -10, -9, -8, -6, -4, -3]);
const rowText = (vals, yPos, yNeg) => vals.split(' ').forEach((v, i) =>
  add('greeks', text(xs[i] + 1, v[0] === '-' ? yNeg : yPos, v, 'middle', v[0] === '-' ? tr : tb)));
rowText('985 1022 1038 1032 1006 960 898 823 737 646', 822);
rowText('17% 18% 18% 18% 18% 17% 16% 14% 13% 11%', 832);
rowText('0.24 0.13 0.03 -0.08 -0.18 -0.27 -0.35 -0.40 -0.44 -0.46', 864, 853);
rowText('0.00 0.00 0.00 0.00 0.00 0.00 0.00 0.00 0.00 0.00', 896);
rowText('13.89 18.94 22.67 24.86 25.45 24.51 22.23 18.90 14.87 10.51', 928);
rowText('-29.79 -34.81 -37.84 -38.70 -37.41 -34.15 -29.29 -23.27 -16.60 -9.78', 0, 949);
[['PnL', 816], ['Delta', 858], ['Gamma', 890], ['Theta', 922], ['Vega', 954]].forEach(([s, y]) => {
  add('greeks', text(1084, y, s, 'middle', '#5f6670') + text(1880, y, s, 'middle', '#5f6670'));
});
[['25078.50', 779, '#111'], ['870', 812, '#0000f0'], ['15.2%', 827, '#0000f0'], ['-0.37', 859, '#ff0000'], ['0.00', 891, '#0000f0'], ['21.03', 923, '#0000f0'], ['-27.04', 955, '#ff0000']]
  .forEach(([s, y, c]) => add('cursor', text(1648, y, s, 'middle', c)));
```
